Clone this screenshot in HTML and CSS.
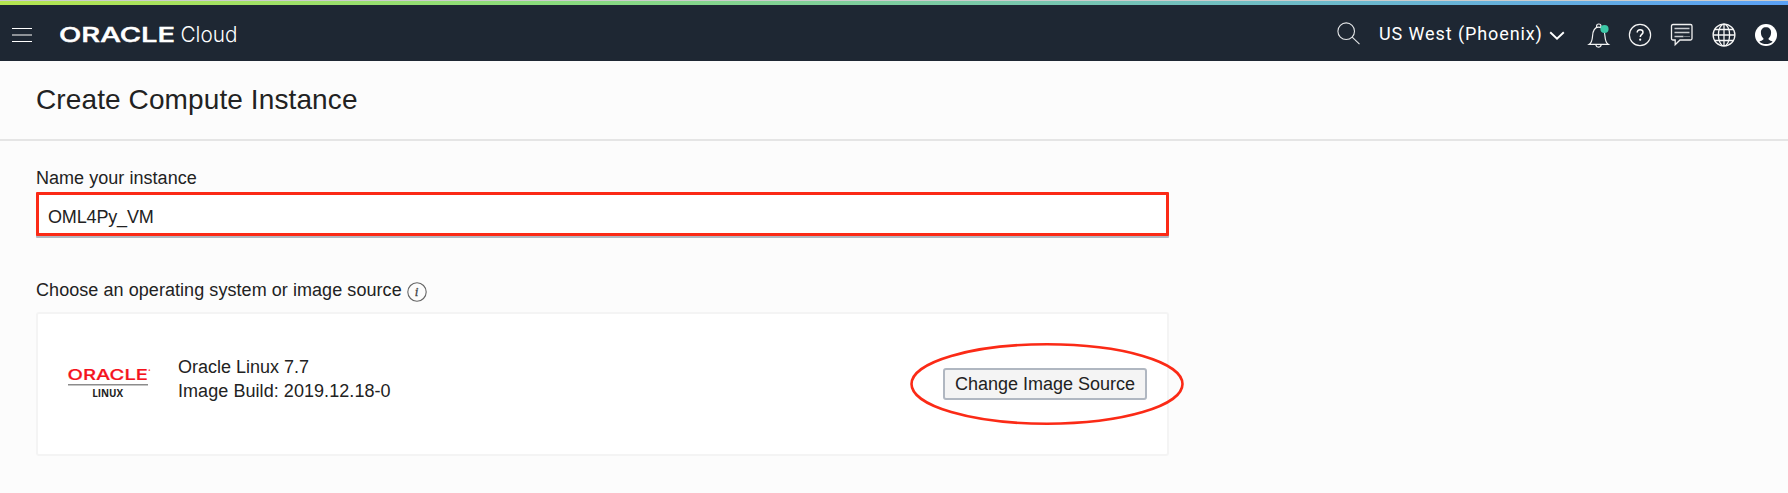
FILE: index.html
```html
<!DOCTYPE html>
<html lang="en">
<head>
<meta charset="utf-8">
<title>Create Compute Instance</title>
<link rel="stylesheet" href="styles.css">
</head>
<body>
<div class="strip"></div>
<header class="topbar">
  <svg class="menu" width="20" height="15" viewBox="0 0 20 15"><path fill="#fff" d="M0 0h20v1H0zM0 13h20v1H0z"/><path fill="#8e9297" d="M0 6h20v2H0z"/></svg>
  <svg class="brand" width="180" height="30" viewBox="0 0 180 30">
    <text class="oracle" x="-1" y="20.500" textLength="116" lengthAdjust="spacingAndGlyphs">ORACLE</text>
    <text class="cloud" x="120.5" y="20.500" textLength="57" lengthAdjust="spacingAndGlyphs">Cloud</text>
  </svg>
  <div class="tools">
    <svg class="search" width="24" height="24" viewBox="0 0 24 24"><g fill="none" stroke="#e4e6e8" stroke-width="1.1"><circle cx="9.2" cy="9.2" r="8.3"/><path d="M15.2 15.2l7.3 7"/></g></svg>
    <span class="region">US West (Phoenix)</span>
    <svg class="chevron" width="16" height="12" viewBox="0 0 16 12"><path d="M1.2 2.2L8 8.7l6.800-6.500" fill="none" stroke="#fff" stroke-width="1.9"/></svg>
    <svg class="bell" width="22" height="26" viewBox="0 0 22 26"><g fill="none" stroke="#f4f4f4" stroke-width="1.2"><path d="M8.600 4.200V3a2.200 2 0 0 1 4.400 0v1.200M1.300 21.300c2.500-1.500 2.900-4 3.200-7.800C4.800 8 6.500 4.200 10.700 4.200s6 3.800 6.300 9.300c.3 3.800.7 6.300 3.200 7.800zM7.800 21.800c.4 1.600 1.300 2.300 2.600 2.300s2.400-.7 2.800-2.300"/></g><circle cx="16.500" cy="6" r="4.100" fill="#3cc8a7"/></svg>
    <svg class="help" width="24" height="24" viewBox="0 0 24 24"><circle cx="12" cy="12" r="10.600" fill="none" stroke="#f4f4f4" stroke-width="1.200"/><path d="M9.200 9.600c0-1.800 1.100-2.900 2.900-2.900s2.900 1 2.900 2.500c0 2.200-2.700 2.300-2.700 4.800" fill="none" stroke="#fff" stroke-width="1.500"/><circle cx="12.200" cy="16.700" r="1.100" fill="#fff"/></svg>
    <svg class="chat" width="24" height="24" viewBox="0 0 24 24"><path d="M3 1.500h17.500q1.500 0 1.500 1.500v12.500q0 1.500-1.500 1.500H10l-4.800 4.800V17H3q-1.500 0-1.500-1.500V3Q1.500 1.500 3 1.500z" fill="none" stroke="#f0f0f0" stroke-width="1.300"/><path d="M4.500 5.500h15M4.500 9.500h15M4.500 13.500h9" stroke="#c9ccd0" stroke-width="1.400"/><path d="M14.500 13.500h5" stroke="#c9ccd0" stroke-width="1.200" stroke-dasharray="1 1"/></svg>
    <svg class="globe" width="24" height="24" viewBox="0 0 24 24"><g fill="none" stroke="#f6f6f6" stroke-width="1.300"><circle cx="12" cy="12" r="10.900"/><ellipse cx="12" cy="12" rx="5.600" ry="10.900"/><path d="M12 1v22M1 12h22M2.800 6.500h18.400M2.800 17.500h18.400"/></g></svg>
    <svg class="user" width="22" height="22" viewBox="0 0 22 22"><circle cx="11" cy="11" r="11" fill="#fff"/><path d="M11 3.200c3.200 0 5.100 2.100 5.100 5.100 0 2.900-1 4.800-2.500 6v1.300c.9.900 2.700 1.400 4 2.100-3.800 3.100-9.400 3.100-13.200 0 1.300-.7 3.100-1.200 4-2.100v-1.300c-1.500-1.200-2.500-3.100-2.500-6 0-3 1.900-5.100 5.100-5.100z" fill="#1e2733"/></svg>
  </div>
</header>
<div class="heading"><h1>Create Compute Instance</h1></div>
<main class="form">
  <label class="label" for="name">Name your instance</label>
  <input class="name" id="name" type="text" value="OML4Py_VM">
  <div class="source-label">
    <span>Choose an operating system or image source</span>
    <svg width="20" height="20" viewBox="0 0 20 20"><circle cx="10" cy="10" r="9.200" fill="none" stroke="#666" stroke-width="1.100"/><text class="info" x="7.700" y="14.300">i</text></svg>
  </div>
  <section class="card">
    <svg class="linux" width="86" height="34" viewBox="0 0 86 34">
      <text class="oracle red" x="-.5" y="12.500" textLength="80.500" lengthAdjust="spacingAndGlyphs">ORACLE</text>
      <circle cx="81.300" cy="3.200" r=".9" fill="#f66"/>
      <path d="M0 17.700h80" stroke="#8c8c8c" stroke-width="1.500"/>
      <text class="linux-name" x="24.200" y="30.300" textLength="31" lengthAdjust="spacingAndGlyphs">LINUX</text>
    </svg>
    <div class="details"><div>Oracle Linux 7.7</div><div class="build">Image Build: 2019.12.18-0</div></div>
    <div class="action">
      <button class="change" type="button">Change Image Source</button>
      <svg class="ring" width="276" height="86" viewBox="0 0 276 86"><ellipse cx="138" cy="43" rx="135.500" ry="39.700" fill="none" stroke="#fb2a16" stroke-width="2.600"/></svg>
    </div>
  </section>
</main>
</body>
</html>
```
FILE: styles.css
```css
* { box-sizing: border-box; }
body {
  margin: 0;
  height: 493px;
  overflow: hidden;
  background: #fcfcfc;
  color: #222;
  font: 18px/24px "Liberation Sans", Arial, sans-serif;
}
svg { display: block; flex: none; overflow: visible; }
.strip {
  height: 5px;
  border-top: 1px solid #ccc;
  background: linear-gradient(90deg, #b5e550, #8adc7c 30%, #6cb9cc 75%, #5aa0f5);
}
.topbar {
  height: 56px;
  display: flex;
  align-items: flex-start;
  padding-left: 12px;
  background: #1e2733;
}
.menu { margin-top: 23px; }
.brand { margin: 16px 0 0 28px; }
.oracle {
  font: 500 20px Inter, sans-serif;
  fill: #fff;
  stroke: #fff;
  stroke-width: .5px;
}
.cloud { font: 300 22px Inter, sans-serif; fill: #fff; }
.tools { display: flex; align-items: flex-start; margin-left: auto; padding-right: 11px; }
.search { margin: 17px 18px 0 0; }
.region {
  margin-top: 17px;
  width: 164px;
  color: #fff;
  font: 400 18px/24px Roboto, sans-serif;
  letter-spacing: .9px;
  white-space: nowrap;
}
.chevron { margin: 25px 0 0 6px; }
.bell { margin: 18px 0 0 23px; }
.help { margin: 18px 0 0 18px; }
.chat { margin: 18px 0 0 18px; }
.globe { margin: 18px 0 0 18px; }
.user { margin: 19px 0 0 19px; }
.heading {
  height: 80px;
  padding: 23px 36px 0;
  border-bottom: 2px solid #e5e5e5;
}
h1 {
  margin: 0;
  font-size: 28px;
  line-height: 32px;
  font-weight: 400;
  letter-spacing: .11px;
}
.form { width: 1169px; padding: 25px 0 0 36px; }
.label { display: block; height: 26px; letter-spacing: .04px; }
.name {
  display: block;
  width: 1133px;
  height: 44px;
  padding: 6px 9px 0;
  border: 3px solid #fb2a16;
  border-radius: 1px;
  box-shadow: 0 2px 0 #b1b8c2;
  background: #fff;
  color: #222;
  font: inherit;
  letter-spacing: -.15px;
}
.source-label { display: flex; margin-top: 42px; height: 34px; letter-spacing: .06px; }
.source-label svg { margin: 4px 0 0 5px; }
.info { font: italic 13px "Liberation Serif", serif; fill: #444; stroke: #444; stroke-width: .3px; }
.card {
  display: flex;
  width: 1133px;
  height: 144px;
  padding-left: 30px;
  border: 2px solid #f4f4f4;
  border-radius: 3px;
  background: #fff;
}
.linux { margin-top: 53px; }
.oracle.red { font-size: 15px; fill: #f5121c; stroke: #f5121c; stroke-width: .2px; }
.linux-name { font: 700 10.500px "Open Sans", sans-serif; fill: #222; }
.details { margin: 41px 0 0 24px; }
.build { letter-spacing: .06px; }
.action { position: relative; margin: 54px 20px 0 auto; height: 32px; }
.change {
  display: block;
  width: 204px;
  height: 32px;
  padding: 0;
  border: 2px solid #b0b7c1;
  border-radius: 3px;
  background: #f4f4f4;
  color: #222;
  font: 18px/26px "Liberation Sans", Arial, sans-serif;
}
.ring { position: absolute; left: -34px; top: -27px; pointer-events: none; }
```
